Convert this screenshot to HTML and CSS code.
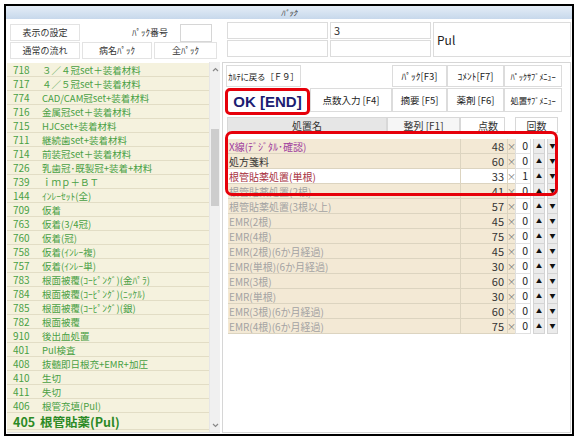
FILE: index.html
```html
<!DOCTYPE html>
<html lang="ja">
<head>
<meta charset="utf-8">
<title>パック</title>
<link rel="stylesheet" href="styles.css">
</head>
<body>
<div class="window">
  <div class="titlebar">ﾊﾟｯｸ</div>
  <div class="top">
    <div class="top-left">
      <div class="top-row">
        <div class="tbtn w70">表示の設定</div>
        <div class="tlabel">ﾊﾟｯｸ番号</div>
        <div class="num-input"></div>
      </div>
      <div class="top-row r2">
        <div class="tbtn w70">通常の流れ</div>
        <div class="tbtn w70">病名ﾊﾟｯｸ</div>
        <div class="tbtn w63">全ﾊﾟｯｸ</div>
      </div>
    </div>
    <div class="top-right">
      <div class="field"></div>
      <div class="field field-num">3</div>
      <div class="field field-name">Pul</div>
      <div class="field"></div>
      <div class="field"></div>
    </div>
  </div>
  <div class="main">
    <div class="list-pane">
      <ul class="list">
        <li><span class="no">718</span><span>３／４冠set＋装着材料</span></li>
        <li><span class="no">717</span><span>４／５冠set＋装着材料</span></li>
        <li><span class="no">774</span><span>CAD/CAM冠set+装着材料</span></li>
        <li><span class="no">716</span><span>金属冠set＋装着材料</span></li>
        <li><span class="no">715</span><span>HJCset+装着材料</span></li>
        <li><span class="no">711</span><span>継続歯set+装着材料</span></li>
        <li><span class="no">714</span><span>前装冠set＋装着材料</span></li>
        <li><span class="no">726</span><span>乳歯冠･既製冠+装着+材料</span></li>
        <li><span class="no">739</span><span>ｉｍｐ＋ＢＴ</span></li>
        <li><span class="no">144</span><span>ｲﾝﾚｰｾｯﾄ(全)</span></li>
        <li><span class="no">709</span><span>仮着</span></li>
        <li><span class="no">763</span><span>仮着(3/4冠)</span></li>
        <li><span class="no">760</span><span>仮着(冠)</span></li>
        <li><span class="no">758</span><span>仮着(ｲﾝﾚｰ複)</span></li>
        <li><span class="no">757</span><span>仮着(ｲﾝﾚｰ単)</span></li>
        <li><span class="no">783</span><span>根面被覆(ｺｰﾋﾟﾝｸﾞ)(金ﾊﾟﾗ)</span></li>
        <li><span class="no">784</span><span>根面被覆(ｺｰﾋﾟﾝｸﾞ)(ﾆｯｹﾙ)</span></li>
        <li><span class="no">785</span><span>根面被覆(ｺｰﾋﾟﾝｸﾞ)(銀)</span></li>
        <li><span class="no">782</span><span>根面被覆</span></li>
        <li><span class="no">910</span><span>後出血処置</span></li>
        <li><span class="no">401</span><span>Pul検査</span></li>
        <li><span class="no">408</span><span>抜髄即日根充+EMR+加圧</span></li>
        <li><span class="no">410</span><span>生切</span></li>
        <li><span class="no">411</span><span>失切</span></li>
        <li><span class="no">406</span><span>根管充填(Pul)</span></li>
        <li class="cur"><span class="no">405</span><span>根管貼薬(Pul)</span></li>
      </ul>
      <div class="scrollbar">
        <div class="sb-arrow"><svg width="7" height="5" viewBox="0 0 7 5"><path d="M1 4 L3.5 1.5 L6 4" fill="none" stroke="#888" stroke-width="1.2"/></svg></div>
        <div class="sb-track"><div class="sb-thumb"></div></div>
        <div class="sb-arrow"><svg width="7" height="5" viewBox="0 0 7 5"><path d="M1 1 L3.5 3.5 L6 1" fill="none" stroke="#888" stroke-width="1.2"/></svg></div>
      </div>
    </div>
    <div class="work">
      <div class="brow">
        <div class="b w75 b-small">ｶﾙﾃに戻る［Ｆ９］</div>
        <div class="spacer"></div>
        <div class="b w55">ﾊﾟｯｸ[F3]</div>
        <div class="b w57">ｺﾒﾝﾄ[F7]</div>
        <div class="b w58 b-small">ﾊﾟｯｸｻﾌﾞﾒﾆｭｰ</div>
      </div>
      <div class="brow brow2">
        <div class="b ok">OK [END]</div>
        <div class="b w82">点数入力 [F4]</div>
        <div class="b w55">摘要 [F5]</div>
        <div class="b w57">薬剤 [F6]</div>
        <div class="b w58 b-small">処置ｻﾌﾞﾒﾆｭｰ</div>
      </div>
      <div class="thead">
        <div class="th th-name">処置名</div>
        <div class="th th-sort">整列 [F1]</div>
        <div class="th th-pts">点数</div>
        <div class="th th-cnt">回数</div>
      </div>
      <div class="tbl">
        <div class="tr"><div class="td-name c-purple">X線(ﾃﾞｼﾞﾀﾙ･確認)</div><div class="td-pts">48</div><div class="td-x">×</div><div class="cnt">0</div><div class="spin">▲</div><div class="spin">▼</div></div>
        <div class="tr"><div class="td-name c-dark">処方箋料</div><div class="td-pts">60</div><div class="td-x">×</div><div class="cnt">0</div><div class="spin">▲</div><div class="spin">▼</div></div>
        <div class="tr sel"><div class="td-name c-red">根管貼薬処置(単根)</div><div class="td-pts">33</div><div class="td-x">×</div><div class="cnt">1</div><div class="spin">▲</div><div class="spin">▼</div></div>
        <div class="tr"><div class="td-name">根管貼薬処置(2根)</div><div class="td-pts">41</div><div class="td-x">×</div><div class="cnt">0</div><div class="spin">▲</div><div class="spin">▼</div></div>
        <div class="tr"><div class="td-name">根管貼薬処置(3根以上)</div><div class="td-pts">57</div><div class="td-x">×</div><div class="cnt">0</div><div class="spin">▲</div><div class="spin">▼</div></div>
        <div class="tr"><div class="td-name">EMR(2根)</div><div class="td-pts">45</div><div class="td-x">×</div><div class="cnt">0</div><div class="spin">▲</div><div class="spin">▼</div></div>
        <div class="tr"><div class="td-name">EMR(4根)</div><div class="td-pts">75</div><div class="td-x">×</div><div class="cnt">0</div><div class="spin">▲</div><div class="spin">▼</div></div>
        <div class="tr"><div class="td-name">EMR(2根)(6か月経過)</div><div class="td-pts">45</div><div class="td-x">×</div><div class="cnt">0</div><div class="spin">▲</div><div class="spin">▼</div></div>
        <div class="tr"><div class="td-name">EMR(単根)(6か月経過)</div><div class="td-pts">30</div><div class="td-x">×</div><div class="cnt">0</div><div class="spin">▲</div><div class="spin">▼</div></div>
        <div class="tr"><div class="td-name">EMR(3根)</div><div class="td-pts">60</div><div class="td-x">×</div><div class="cnt">0</div><div class="spin">▲</div><div class="spin">▼</div></div>
        <div class="tr"><div class="td-name">EMR(単根)</div><div class="td-pts">30</div><div class="td-x">×</div><div class="cnt">0</div><div class="spin">▲</div><div class="spin">▼</div></div>
        <div class="tr"><div class="td-name">EMR(3根)(6か月経過)</div><div class="td-pts">60</div><div class="td-x">×</div><div class="cnt">0</div><div class="spin">▲</div><div class="spin">▼</div></div>
        <div class="tr"><div class="td-name">EMR(4根)(6か月経過)</div><div class="td-pts">75</div><div class="td-x">×</div><div class="cnt">0</div><div class="spin">▲</div><div class="spin">▼</div></div>
      </div>
      <div class="highlight"></div>
    </div>
  </div>
</div>
</body>
</html>
```

FILE: styles.css
```css
* { box-sizing: border-box; }
body {
  margin: 0;
  background: #fff;
  font-family: "Noto Sans CJK JP", "Liberation Sans", sans-serif;
  color: #333;
}
.window {
  margin: 4px 0 0 4px;
  width: 570px;
  height: 432px;
  border: 2px solid #000;
  display: flex;
  flex-direction: column;
  background: #fff;
}
.titlebar {
  height: 13px;
  background: linear-gradient(#e4edf7, #c7d8eb);
  font-size: 8px;
  line-height: 13px;
  text-align: center;
  color: #333;
  font-style: italic;
}
.top {
  display: flex;
  height: 43px;
  flex: none;
}
.top-left {
  width: 208px;
  margin-left: 4px;
  padding-top: 5px;
  display: flex;
  flex-direction: column;
  gap: 1px;
}
.top-row {
  display: flex;
  height: 17px;
}
.top-row.r2 { gap: 2px; }
.tbtn {
  border: 1px solid #e3e3e3;
  background: #fff;
  font-size: 9px;
  display: flex;
  align-items: center;
  justify-content: center;
  color: #333;
}
.w70 { width: 70px; }
.w63 { width: 63px; }
.tlabel {
  flex: 1;
  text-align: right;
  padding-right: 12px;
  font-size: 9px;
  line-height: 17px;
  color: #333;
}
.num-input {
  width: 32px;
  height: 18px;
  margin-right: 6px;
  border: 1px solid #d6d6d6;
}
.top-right {
  margin-left: 9px;
  padding-top: 3px;
  display: grid;
  grid-template-columns: 101px 101px 138px;
  grid-template-rows: 17px 17px;
  column-gap: 2px;
  row-gap: 1px;
}
.field { border: 1px solid #dcdcdc; }
.field-num {
  font-size: 11px;
  line-height: 14px;
  padding-left: 3px;
  color: #333;
}
.field-name {
  grid-column: 3;
  grid-row: 1 / span 2;
  display: flex;
  align-items: center;
  padding-left: 3px;
  font-size: 12px;
  color: #222;
}
.main {
  flex: 1;
  display: flex;
  padding: 0 1px 1px 1px;
  min-height: 0;
}
.list-pane {
  width: 213px;
  display: flex;
  border-bottom: 1px solid #e0e0e0;
}
.list {
  flex: 1;
  margin: 1px 0 0 0;
  padding: 0;
  list-style: none;
  background: #f5f2de;
  overflow: hidden;
}
.list li {
  height: 14px;
  border-bottom: 1px solid #e2ddc5;
  display: flex;
  align-items: center;
  font-size: 9.5px;
  color: #48a043;
  white-space: nowrap;
}
.list .no {
  width: 35px;
  padding-left: 6px;
  flex: none;
  font-size: 10px;
}
.list li.cur {
  height: 17px;
  font-size: 12.5px;
  font-weight: bold;
  color: #2c8a25;
}
.list li.cur .no { width: 33px; font-size: 12.5px; }
.scrollbar {
  width: 11px;
  background: #f0f0f0;
  border-left: 1px solid #e6e6e6;
  display: flex;
  flex-direction: column;
}
.sb-arrow {
  height: 14px;
  display: flex;
  align-items: center;
  justify-content: center;
}
.sb-track { flex: 1; }
.sb-thumb {
  margin: 53px 1px 0 1px;
  height: 77px;
  background: #cdcdcd;
}
.work {
  flex: 1;
  margin-left: 2px;
  border: 1px solid #d6d6d6;
  position: relative;
  padding: 2px 2px 0 2px;
}
.brow {
  display: flex;
  height: 22px;
  margin-left: 1px;
}
.brow2 {
  height: 27px;
  margin-left: 0;
  margin-top: 1px;
  align-items: flex-start;
}
.b {
  border: 1px solid #dcdcdc;
  background: #fff;
  font-size: 9.5px;
  display: flex;
  align-items: center;
  justify-content: center;
  color: #222;
  height: 100%;
  white-space: nowrap;
}
.brow2 .b { height: 24px; }
.b-small { font-size: 8.5px; letter-spacing: -0.2px; }
.w75 { width: 75px; }
.w55 { width: 55px; }
.w57 { width: 57px; }
.w58 { width: 58px; }
.w82 { width: 82px; }
.spacer { width: 91px; }
.brow2 .b.ok {
  width: 85px;
  height: 27px;
  border: 3px solid #e6000a;
  border-radius: 5px;
  font-family: "Liberation Sans", sans-serif;
  font-weight: bold;
  font-size: 15px;
  color: #1c1c72;
}
.thead {
  display: flex;
  height: 16px;
  margin: 2px 0 0 2px;
}
.th {
  border: 1px solid #d8d8d8;
  font-size: 10px;
  display: flex;
  align-items: center;
  justify-content: center;
  color: #333;
}
.th-name { width: 160px; background: #e6e6e6; }
.th-sort { width: 73px; background: #f6f6f6; }
.th-pts { width: 45px; background: #fff; justify-content: flex-end; padding-right: 6px; }
.th-cnt { width: 43px; margin-left: 10px; background: #fff; }
.tbl {
  margin: 6px 0 0 3px;
}
.tr {
  display: flex;
  height: 15px;
  font-size: 10px;
}
.td-name, .td-pts, .td-x {
  background: #f3e9d5;
  border-bottom: 1px solid #dcd4c0;
  display: flex;
  align-items: center;
}
.td-name {
  width: 232px;
  padding-left: 1px;
  color: #a3a3a3;
  white-space: nowrap;
}
.td-pts {
  width: 48px;
  justify-content: flex-end;
  padding-right: 3px;
  border-left: 1px solid #dcd4c0;
  border-right: 1px solid #dcd4c0;
  color: #333;
  font-size: 11px;
}
.td-x {
  width: 7px;
  font-size: 9px;
  color: #777;
  justify-content: center;
}
.tr.sel .td-name, .tr.sel .td-pts, .tr.sel .td-x { background: #fff; }
.tr .td-name.c-purple { color: #a0409d; }
.tr .td-name.c-dark { color: #333; }
.tr .td-name.c-red { color: #a8323f; }
.cnt {
  width: 16px;
  background: #fff;
  border: 1px solid #e0e0e0;
  border-top: none;
  text-align: right;
  padding-right: 2px;
  font-size: 10.5px;
  line-height: 14px;
  color: #222;
}
.spin {
  width: 12px;
  margin-left: 2px;
  background: #ebebeb;
  border: 1px solid #d4d4d4;
  border-top: none;
  font-size: 6px;
  line-height: 14px;
  text-align: center;
  color: #111;
}
.spin:last-child { width: 11px; }
.highlight {
  position: absolute;
  left: 2px;
  top: 68px;
  width: 333px;
  height: 65px;
  border: 3px solid #e6000a;
  border-radius: 7px;
  pointer-events: none;
}
```
